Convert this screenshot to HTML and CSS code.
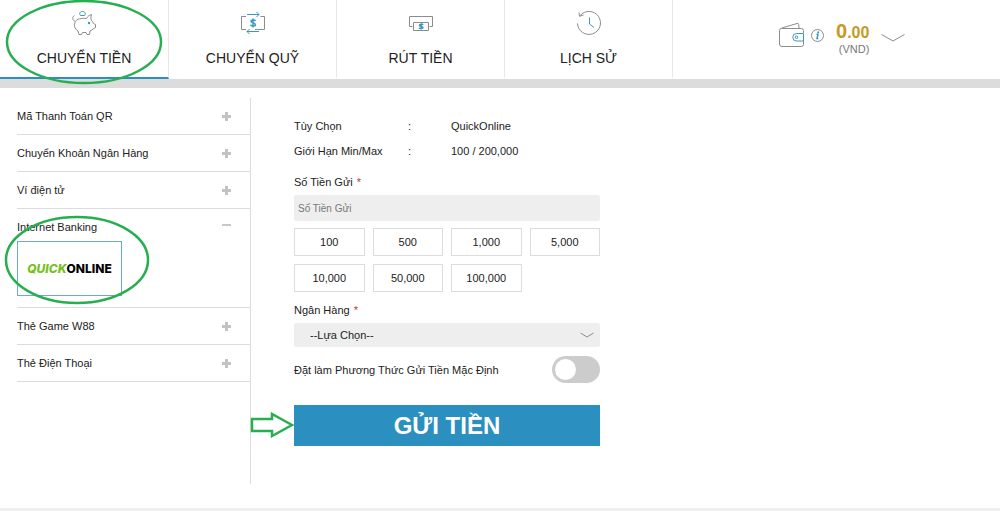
FILE: index.html
```html
<!DOCTYPE html>
<html lang="vi">
<head>
    <meta charset="UTF-8">
    <meta name="viewport" content="width=device-width, initial-scale=1.0">
    <title>Gửi Tiền - QuickOnline</title>
    <link rel="stylesheet" href="styles.css">
</head>
<body>

    <!-- Top navigation -->
    <header class="header">
        <nav class="tabs">
            <a href="#" class="tab active">
                <svg class="tab-icon" viewBox="0 0 24 24">
                    <path d="M2.500 4.500C0 6 0 9.500 3.500 10.500C5 8 8.500 7 14.500 7.500C15.500 5.500 17 4.500 19.500 3.500C19 5.500 18.500 7.500 19.500 9.500C20.500 10.500 21 11.500 21.500 12.500L23.500 13.500V16.500L21 18C20 19 19 19.500 18 20L17.500 23.500H15L14 21.500H10.500L9.500 23.500H7L6 20C2.500 18 1.500 14 3.500 10.500"/>
                    <path class="blue" d="M8.500 4.500C6.500 2 8.500 .500 10.500 .500C12.500 .500 14.500 2 12.500 4.500Z"/>
                    <circle class="blue-dot" cx="17" cy="12" r="1.200"/>
                </svg>
                <span>CHUYỂN TIỀN</span>
            </a>
            <a href="#" class="tab">
                <svg class="tab-icon" viewBox="0 0 24 24">
                    <path d="M5 5.500H.500V18.500H5M19.500 5.500H23.500V18.500H14"/>
                    <path class="blue" d="M6 3.500H18M15.500 1L18 3.500L15.500 6M18 20.500H6M8.500 18L6 20.500L8.500 23"/>
                    <path class="blue thick" d="M14.500 10C14 8.500 10 8.500 10 10.300C10 12.500 14.500 11.500 14.500 13.700C14.500 15.500 10 15.500 9.500 13.800M12 7.500V16.500"/>
                </svg>
                <span>CHUYỂN QUỸ</span>
            </a>
            <a href="#" class="tab">
                <svg class="tab-icon" viewBox="0 0 24 24">
                    <path d="M3.500 15.500H.500V5.500H23.500V15.500H20.500M4.500 11.500H19.500V19.500H4.500Z"/>
                    <path class="blue thick" d="M14 14C13.500 12.800 10.500 12.800 10.500 14.200C10.500 15.800 14 15 14 16.600C14 18 10.500 18 10 16.800M12.200 12.500V18.500"/>
                </svg>
                <span>RÚT TIỀN</span>
            </a>
            <a href="#" class="tab">
                <svg class="tab-icon" viewBox="0 0 24 24">
                    <path d="M.500 12.500A11.500 11.500 0 1 0 3.200 4.500M2 1.500L2.500 5.300L6.500 4"/>
                    <path class="blue" d="M12.500 6.500V13L17 16.500"/>
                </svg>
                <span>LỊCH SỬ</span>
            </a>
            <svg class="mark mark-tab" viewBox="0 0 158 86">
                <ellipse cx="79" cy="42" rx="77" ry="41" stroke-width="2.5"/>
            </svg>
        </nav>

        <div class="account">
            <svg class="wallet" viewBox="0 0 26 26">
                <path d="M3 6.500H22.500Q24.500 6.500 24.500 8.500V11M24.500 19V22.500Q24.500 24.500 22.500 24.500H3Q.500 24.500 .500 22V8.500Q.500 6.500 3 6L18 1.500Q19.500 1 19.700 2.500L20 6"/>
                <path class="blue" d="M24.500 11.500H17.500A3.700 3.700 0 0 0 17.500 19H24.500Z"/>
                <circle class="blue" cx="17.500" cy="15.200" r="1.300"/>
            </svg>
            <svg class="info" viewBox="0 0 13 13">
                <circle cx="6.500" cy="6.500" r="6"/>
                <path class="blue thick" d="M5.500 5.300H7L6 9.500H7.300"/>
                <circle class="blue-dot" cx="7.200" cy="3.200" r="1"/>
            </svg>
            <div class="balance">
                <div class="amount">0<small>.00</small></div>
                <div class="currency">(VND)</div>
            </div>
            <svg class="account-arrow" viewBox="0 0 24 8">
                <path d="M.500 .500L12 7L23.500 .500"/>
            </svg>
        </div>
    </header>

    <main class="content">
        <!-- Payment methods -->
        <aside class="sidebar">
            <a href="#" class="method">Mã Thanh Toán QR <i class="plus"></i></a>
            <a href="#" class="method">Chuyển Khoản Ngân Hàng <i class="plus"></i></a>
            <a href="#" class="method">Ví điện tử <i class="plus"></i></a>
            <div class="method-open">
                <a href="#" class="method">Internet Banking <i class="plus minus"></i></a>
                <a href="#" class="provider"><span class="quick">QUICK</span><span class="online">ONLINE</span></a>
                <svg class="mark mark-provider" viewBox="0 0 146 90">
                    <ellipse cx="73" cy="45" rx="71" ry="43" stroke-width="2.5"/>
                </svg>
            </div>
            <a href="#" class="method">Thẻ Game W88 <i class="plus"></i></a>
            <a href="#" class="method">Thẻ Điện Thoại <i class="plus"></i></a>
        </aside>

        <!-- Deposit form -->
        <form class="deposit">
            <dl class="details">
                <dt>Tùy Chọn</dt><dd>:</dd><dd>QuickOnline</dd>
                <dt>Giới Hạn Min/Max</dt><dd>:</dd><dd>100 / 200,000</dd>
            </dl>

            <label class="label" for="amount">Số Tiền Gửi <span class="required">*</span></label>
            <input class="field" type="text" id="amount" placeholder="Số Tiền Gửi">

            <div class="amounts">
                <button type="button">100</button>
                <button type="button">500</button>
                <button type="button">1,000</button>
                <button type="button">5,000</button>
                <button type="button">10,000</button>
                <button type="button">50,000</button>
                <button type="button">100,000</button>
            </div>

            <label class="label" for="bank">Ngân Hàng <span class="required">*</span></label>
            <div class="select-box">
                <select class="field" id="bank">
                    <option>--Lựa Chọn--</option>
                </select>
                <svg class="select-arrow" viewBox="0 0 14 6">
                    <path d="M.500 1L7 5L13.500 1"/>
                </svg>
            </div>

            <div class="default-row">
                <label for="default">Đặt làm Phương Thức Gửi Tiền Mặc Định</label>
                <input class="toggle" type="checkbox" id="default">
            </div>

            <div class="submit-row">
                <button class="submit" type="submit">GỬI TIỀN</button>
                <svg class="mark mark-submit" viewBox="0 0 44 26">
                    <path d="M2 7H22V2L42 13L22 24V19H2Z" stroke-width="2.5"/>
                </svg>
            </div>
        </form>
    </main>

    <footer class="footer"></footer>

    <script>
        // Fill the amount field from the quick amount buttons
        document.querySelectorAll('.amounts button').forEach(btn => {
            btn.addEventListener('click', () => {
                document.getElementById('amount').value = btn.textContent;
            });
        });

        document.querySelector('.deposit').addEventListener('submit', e => e.preventDefault());
    </script>
</body>
</html>
```
FILE: styles.css
```css
* {
    box-sizing: border-box;
}

body {
    font-family: "Liberation Sans", Arial, sans-serif;
    font-size: 11px;
    color: #222;
    margin: 0;
    min-height: 100vh;
    background-color: #fff;
    display: flex;
    flex-direction: column;
}

a {
    color: inherit;
    text-decoration: none;
}

button, input, select {
    font-family: inherit;
    font-size: 11px;
    color: inherit;
}

svg {
    fill: none;
    stroke: #8c8c8c;
    stroke-width: 1;
}

.blue {
    stroke: #3b97c4;
}

.blue-dot {
    fill: #3b97c4;
    stroke: none;
}

.thick {
    stroke-width: 1.5;
}

/* Header */
.header {
    display: flex;
    border-bottom: 9px solid #dcdcdc;
}

.tabs {
    display: flex;
    position: relative;
}

.tab {
    width: 168px;
    height: 79px;
    padding-top: 11px;
    display: flex;
    flex-direction: column;
    align-items: center;
    gap: 14px;
    font-size: 14px;
    line-height: 18px;
    border-right: 1px solid #e8e8e8;
    border-bottom: 2px solid transparent;
}

.tab:first-child {
    width: 169px;
}

.tab.active {
    border-bottom-color: #2b8fbf;
}

.tab-icon {
    width: 24px;
    height: 24px;
}

.account {
    display: flex;
    align-items: flex-start;
    padding: 22px 20px 0 106px;
}

.wallet {
    width: 26px;
    height: 26px;
}

.info {
    width: 13px;
    height: 13px;
    margin: 7px 12px 0 6px;
}

.balance {
    text-align: right;
}

.amount {
    font-size: 20px;
    line-height: 18px;
    font-weight: bold;
    color: #c8991f;
}

.amount small {
    font-size: 16px;
}

.currency {
    line-height: 14px;
    color: #777;
}

.account-arrow {
    width: 24px;
    height: 8px;
    margin: 12px 0 0 12px;
}

/* Green hand-drawn marks over the page */
.mark {
    position: absolute;
    stroke: #27ae50;
    pointer-events: none;
}

.mark-tab {
    left: 5px;
    top: 0;
    width: 158px;
    height: 86px;
}

.mark-provider {
    left: -13px;
    top: 6px;
    width: 146px;
    height: 90px;
}

.mark-submit {
    right: 100%;
    top: 7px;
    width: 44px;
    height: 26px;
}

/* Content */
.content {
    flex: 1;
    display: flex;
    padding: 10px 0 24px 17px;
}

.sidebar {
    width: 234px;
    border-right: 1px solid #dcdcdc;
}

.method {
    display: flex;
    justify-content: space-between;
    align-items: center;
    height: 37px;
    padding-right: 19px;
    border-bottom: 1px solid #dcdcdc;
}

.plus {
    width: 9px;
    height: 9px;
    background: linear-gradient(#c2c2c2, #c2c2c2) center / 9px 3px no-repeat,
                linear-gradient(#c2c2c2, #c2c2c2) center / 3px 9px no-repeat;
}

.minus {
    height: 6px;
    background: linear-gradient(#c8c8c8, #c8c8c8) top / 9px 2px no-repeat;
}

.method-open {
    position: relative;
    height: 99px;
    border-bottom: 1px solid #dcdcdc;
}

.method-open .method {
    height: 32px;
    padding-top: 4px;
    border-bottom: none;
}

.provider {
    display: flex;
    justify-content: center;
    align-items: center;
    width: 105px;
    height: 55px;
    border: 1px solid #6aaccb;
    font-family: Inter, sans-serif;
    font-size: 12px;
    font-weight: 800;
}

.quick {
    color: #76c01c;
    font-style: italic;
}

.online {
    color: #000;
}

/* Form */
.deposit {
    flex: 0 1 306px;
    margin: 16px 20px 0 43px;
}

.details {
    display: grid;
    grid-template-columns: 114px 43px 1fr;
    margin: 0 0 9px;
    line-height: 25px;
}

.details dd {
    margin: 0;
}

.label {
    display: block;
    line-height: 18px;
    margin-bottom: 4px;
}

.required {
    color: #c0392b;
    margin-left: 1px;
}

.field {
    display: block;
    width: 100%;
    height: 26px;
    padding: 0 4px;
    border: none;
    border-radius: 2px;
    background-color: #eee;
}

.field::placeholder {
    font-size: 10px;
    color: #777;
}

.amounts {
    display: grid;
    grid-template-columns: repeat(4, 1fr);
    gap: 8px;
    margin: 7px 0 9px;
}

.amounts button {
    height: 28px;
    padding: 0;
    border: 1px solid #dcdcdc;
    background-color: #fff;
}

.select-box {
    position: relative;
}

select.field {
    appearance: none;
    height: 24px;
    padding: 0 16px;
}

.select-arrow {
    position: absolute;
    right: 6px;
    top: 9px;
    width: 14px;
    height: 6px;
    pointer-events: none;
}

.default-row {
    display: flex;
    justify-content: space-between;
    align-items: center;
    margin: 9px 0 22px;
}

.toggle {
    appearance: none;
    width: 48px;
    height: 27px;
    margin: 0;
    padding: 3px;
    border-radius: 14px;
    background-color: #ccc;
    cursor: pointer;
}

.toggle::before {
    content: "";
    display: block;
    width: 21px;
    height: 21px;
    border-radius: 50%;
    background-color: #fff;
}

.toggle:checked {
    background-color: #2b8fbf;
}

.toggle:checked::before {
    margin-left: auto;
}

.submit-row {
    position: relative;
}

.submit {
    display: block;
    width: 100%;
    height: 41px;
    border: none;
    background-color: #2b8fbf;
    color: #fff;
    font-size: 24px;
    font-weight: bold;
    cursor: pointer;
}

.footer {
    height: 3px;
    background-color: #eee;
}
```
